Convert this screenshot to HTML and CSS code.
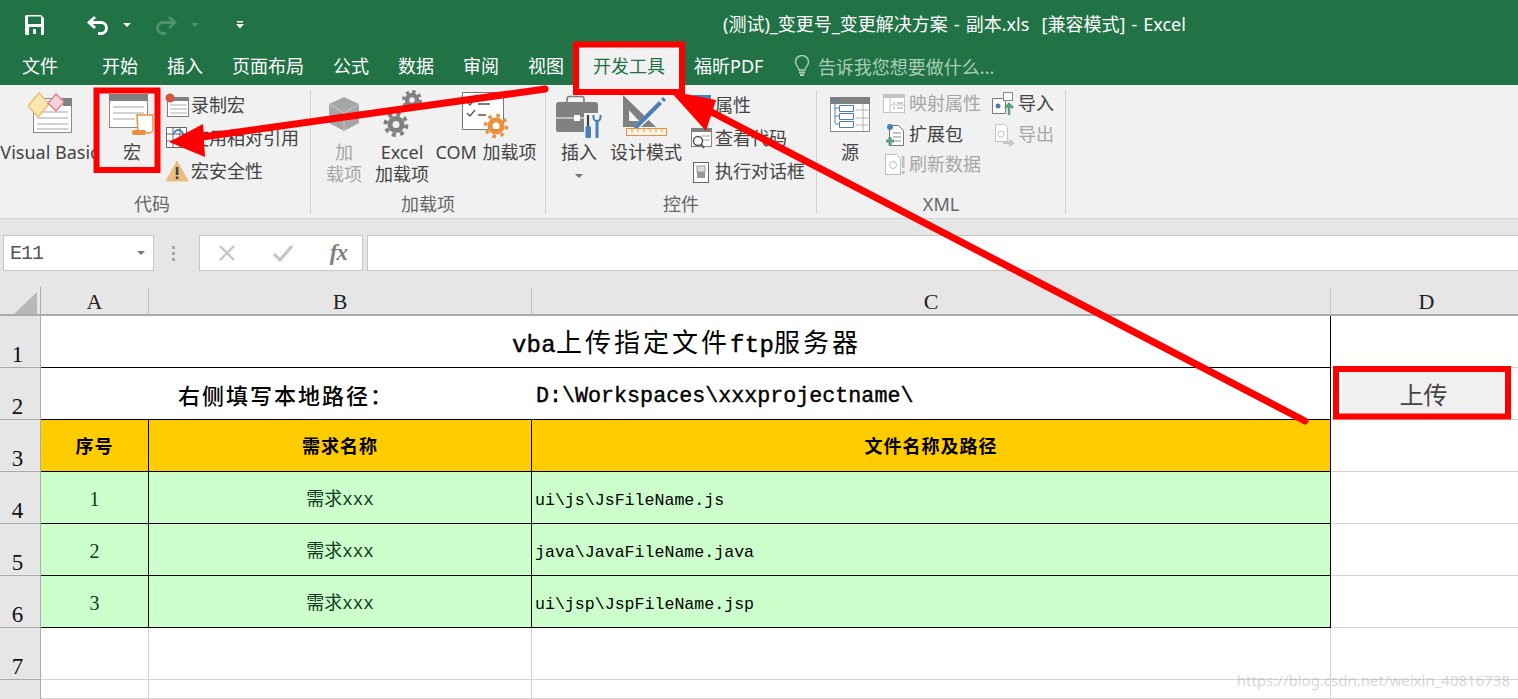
FILE: index.html
```html
<!DOCTYPE html>
<html lang="zh-CN">
<head>
<meta charset="utf-8">
<title>Excel</title>
<link rel="stylesheet" href="styles.css">
</head>
<body>
<div class="app">
  <header class="titlebar">
    <div class="qat">
      <svg class="ico-save" viewBox="25 13 20 20" width="20" height="20"><path fill="#fff" d="M25 14.500a1.500 1.500 0 0 1 1.500-1.500H41l3 3v15.500a1.500 1.500 0 0 1-1.500 1.500h-16a1.500 1.500 0 0 1-1.500-1.500z"/><rect x="28" y="14.500" width="13" height="7.500" fill="#217346"/><rect x="29" y="25" width="12" height="8" fill="#217346"/><rect x="33" y="27" width="3" height="5" fill="#fff"/></svg>
      <svg class="ico-undo" viewBox="86 12 24 22" width="24" height="22"><path fill="none" stroke="#fff" stroke-width="2.800" d="M95 15l-6 5.500 6 5.500M89.500 20.500H101a5.500 5.500 0 0 1 0 11h-3"/></svg>
      <i class="caret light undo-caret"></i>
      <svg class="ico-redo" viewBox="153 12 24 22" width="24" height="22"><path fill="none" stroke="#4f9070" stroke-width="2.800" d="M168 15l6 5.500-6 5.500M173.500 20.500H162a5.500 5.500 0 0 0 0 11h3"/></svg>
      <i class="caret dim redo-caret"></i>
      <svg class="ico-more" viewBox="0 0 8 8" width="8" height="8"><rect x="1" y="0" width="6" height="1.500" fill="#fff"/><path d="M0 3h8L4 7.500z" fill="#fff"/></svg>
    </div>
    <div class="doc-title">(测试)_变更号_变更解决方案 - 副本.xls&nbsp; [兼容模式] - Excel</div>
  </header>

  <nav class="tabs">
    <span class="tab tab-file">文件</span>
    <span class="tab">开始</span>
    <span class="tab">插入</span>
    <span class="tab">页面布局</span>
    <span class="tab">公式</span>
    <span class="tab">数据</span>
    <span class="tab">审阅</span>
    <span class="tab">视图</span>
    <span class="tab active">开发工具</span>
    <span class="tab">福昕PDF</span>
    <span class="tell">
      <svg viewBox="0 0 16 22" width="16" height="22"><path fill="none" stroke="#a9cdb9" stroke-width="1.500" d="M5 15c0-3-3.500-4-3.500-8a6.500 6.500 0 0 1 13 0c0 4-3.500 5-3.500 8z"/><path stroke="#a9cdb9" stroke-width="1.800" d="M5 17.500h6M6 20h4"/></svg>
      告诉我您想要做什么...
    </span>
  </nav>

  <section class="ribbon">
    <div class="group g1">
      <div class="body">
        <div class="big w-vb">
          <svg viewBox="27 90 44 51" width="44" height="51">
            <rect x="32.500" y="98.500" width="38" height="34" fill="#fff" stroke="#8a8a8a"/>
            <rect x="62" y="98" width="9" height="8" fill="#808080"/>
            <path stroke="#a6a6a6" stroke-width="1.200" d="M36 112h31M36 118h31M36 124h31M36 129h31"/>
            <path d="M38 93l10 11-11 13-10-11z" fill="#fbe5b3" stroke="#eac26e" stroke-width="1.500"/>
            <path d="M55 94l8 8-8 9-8-8z" fill="#f6d3da" stroke="#e0808f" stroke-width="1.500"/>
          </svg>
          <span>Visual Basic</span>
        </div>
        <div class="big w-macro">
          <svg viewBox="108 90 48 51" width="48" height="51">
            <rect x="109.500" y="94.500" width="38" height="33" fill="#fff" stroke="#8a8a8a"/>
            <rect x="109" y="94" width="39" height="7" fill="#808080"/>
            <path stroke="#a6a6a6" stroke-width="1.200" d="M113 107h31M113 113h31M113 119h22"/>
            <path d="M137 115h16v14a4 4 0 0 1-4 4h-11z" fill="#fff" stroke="#e8913f" stroke-width="1.500"/>
            <rect x="132" y="130" width="14" height="5" rx="2" fill="#e8913f"/>
          </svg>
          <span>宏</span>
        </div>
        <div class="list l1">
          <div class="row"><svg viewBox="164 92 24 26" width="24" height="26"><rect x="166.500" y="96.500" width="21" height="19" fill="#fff" stroke="#7f7f7f"/><rect x="167" y="96" width="21" height="4" fill="#808080"/><path stroke="#b0b0b0" d="M169 104h17M169 108h17M169 112h17"/><circle cx="169" cy="97" r="4.500" fill="#d2563a"/></svg><span>录制宏</span></div>
          <div class="row"><svg viewBox="164 126 24 26" width="24" height="26"><path fill="#fff" stroke="#666" d="M165.500 127.500h20v20h-20zM172 127.500v20M179 127.500v20M165.500 134h20M165.500 141h20"/><path fill="none" stroke="#3f7fbd" stroke-width="1.800" d="M173 134a4.500 4.500 0 1 1 4 5"/></svg><span>使用相对引用</span></div>
          <div class="row"><svg viewBox="164 158 24 26" width="24" height="26"><path d="M176 160l11 20h-22z" fill="#e8bf80" stroke="#e8bf80" stroke-linejoin="round"/><rect x="174.800" y="166" width="2.600" height="8" fill="#444"/><rect x="174.800" y="175.500" width="2.600" height="2.600" fill="#444"/></svg><span>宏安全性</span></div>
        </div>
      </div>
      <div class="group-label">代码</div>
    </div>

    <div class="group g2">
      <div class="body">
        <div class="big w-addin disabled">
          <svg viewBox="328 90 32 51" width="32" height="51"><path d="M344 97l15 7v19l-15 8-15-8v-19z" fill="#a6a6a6"/><path d="M344 113v18M329 104l15 9 15-9" fill="none" stroke="#c9c9c9"/></svg>
          <span>加<br>载项</span>
        </div>
        <div class="big w-excel">
          <svg viewBox="381 90 42 51" width="42" height="51">
            <g fill="none" stroke="#808080">
              <circle cx="412" cy="100" r="5" stroke-width="4.500"/><circle cx="412" cy="100" r="8.500" stroke-width="3" stroke-dasharray="3.340 3.340"/>
              <circle cx="396" cy="124.500" r="6" stroke-width="5"/><circle cx="396" cy="124.500" r="10.500" stroke-width="4" stroke-dasharray="4 4.250"/>
            </g>
          </svg>
          <span>Excel<br>加载项</span>
        </div>
        <div class="big w-com">
          <svg viewBox="462 90 50 51" width="50" height="51">
            <path d="M463.500 92.500h41v37h-41z" fill="#fff" stroke="#777"/>
            <path d="M468 102l3 3 5-6M468 113l3 3 5-6M479 104h12M479 115h8" fill="none" stroke="#555" stroke-width="1.300"/>
            <g fill="none" stroke="#e8913f"><circle cx="497" cy="126" r="6" stroke-width="5"/><circle cx="497" cy="126" r="10.500" stroke-width="3.500" stroke-dasharray="3.500 4.750"/></g>
          </svg>
          <span>COM 加载项</span>
        </div>
      </div>
      <div class="group-label">加载项</div>
    </div>

    <div class="group g3">
      <div class="body">
        <div class="big w-insert">
          <svg viewBox="557 90 48 51" width="48" height="51">
            <path d="M569 102v-3a2.500 2.500 0 0 1 2.500-2.500h12a2.500 2.500 0 0 1 2.500 2.500v3" fill="none" stroke="#808080" stroke-width="1.600"/>
            <path d="M558 105a3 3 0 0 1 3-3h36a3 3 0 0 1 3 3v25a2 2 0 0 1-2 2h-38a2 2 0 0 1-2-2z" fill="#808080"/>
            <path d="M558 118h40" stroke="#fff"/><rect x="576" y="115" width="6" height="6" fill="#fff"/>
            <path d="M586 113h19v26h-19z" fill="#f1f1f1"/>
            <path d="M590 115v11" stroke="#404040" stroke-width="2.200"/><rect x="587.500" y="126" width="5.500" height="12" rx="1.500" fill="#4a7fb8"/>
            <path d="M599 121v17" stroke="#4a7fb8" stroke-width="3"/><path d="M595.500 115v2.500a3.500 3.500 0 0 0 7 0V115" fill="none" stroke="#4a7fb8" stroke-width="2"/>
          </svg>
          <span>插入</span>
          <i class="caret grey insert-caret"></i>
        </div>
        <div class="big w-design">
          <svg viewBox="625 90 46 51" width="46" height="51">
            <path d="M625 95l33 32h-33z" fill="#808080"/><path d="M631 110l10 11h-10z" fill="#f1f1f1"/>
            <path d="M637 125l25-24 4 4-25 24-5 1z" fill="#f1f1f1"/>
            <path d="M637 125l24-24 3 3-24 24-4 0z" fill="#4a7fb8"/>
            <path d="M663 99l2-2 3 3-2 2z" fill="#4a7fb8"/>
            <rect x="628.500" y="128.500" width="40" height="7" fill="#fdf3e6" stroke="#e8913f"/>
            <path stroke="#e8913f" d="M634 129v3M640 129v3M646 129v3M652 129v3M658 129v3M664 129v3"/>
          </svg>
          <span>设计模式</span>
        </div>
        <div class="list l3">
          <div class="row"><svg viewBox="690 92 22 26" width="22" height="26"><rect x="692.500" y="96.500" width="17" height="19" fill="#fff" stroke="#808080"/><rect x="692" y="94" width="18" height="6" fill="#4a7fb8"/></svg><span>属性</span></div>
          <div class="row"><svg viewBox="690 126 22 26" width="22" height="26"><rect x="690.500" y="128.500" width="20" height="18" fill="#fff" stroke="#808080"/><rect x="690" y="128" width="21" height="4" fill="#808080"/><path stroke="#a6a6a6" d="M700 136h9M702 140h7"/><circle cx="697" cy="141" r="4.500" fill="#fff" stroke="#555" stroke-width="1.500"/><path d="M700 144l3 4" stroke="#555" stroke-width="1.800"/></svg><span>查看代码</span></div>
          <div class="row"><svg viewBox="690 158 22 26" width="22" height="26"><rect x="692.500" y="161.500" width="15" height="20" fill="#fff" stroke="#666"/><rect x="696" y="165" width="8" height="6" fill="#ddd" stroke="#999"/><rect x="696" y="171" width="8" height="6" fill="#999"/></svg><span>执行对话框</span></div>
        </div>
      </div>
      <div class="group-label">控件</div>
    </div>

    <div class="group g4">
      <div class="body">
        <div class="big w-source">
          <svg viewBox="829 90 42 51" width="42" height="51">
            <rect x="830.500" y="97.500" width="39" height="34" fill="#fff" stroke="#8a8a8a"/>
            <rect x="830" y="97" width="40" height="7" fill="#808080"/>
            <path stroke="#b5b5b5" d="M856 110h14M856 118h14M856 125h14M863 104v27"/>
            <path d="M835 98v25M835 108h4M835 116h4M835 124h4" fill="none" stroke="#4a7fb8"/>
            <path d="M839.500 105.500h14v6h-14zM839.500 113.500h14v6h-14zM839.500 121.500h14v6h-14z" fill="#fff" stroke="#4a7fb8"/>
          </svg>
          <span>源</span>
        </div>
        <div class="list l4a">
          <div class="row disabled"><svg viewBox="883 93 22 22" width="22" height="22"><rect x="883.500" y="94.500" width="21" height="18" fill="#fff" stroke="#c4c4c4"/><rect x="883" y="94" width="22" height="4" fill="#c4c4c4"/><path stroke="#c4c4c4" d="M890 98v14M890 105h14"/><path stroke="#999" d="M893 103h2M897 103h6M893 108h2M897 108h6"/></svg><span>映射属性</span></div>
          <div class="row"><svg viewBox="883 123 22 24" width="22" height="24"><path d="M889.500 125.500h9l5 5v15h-14z" fill="#fff" stroke="#777"/><path stroke="#888" d="M893 133h8M893 137h8M893 141h8"/><circle cx="890" cy="127" r="3" fill="#4a7fb8"/><path d="M886 141h8M890 137v8" stroke="#5d9c80" stroke-width="3"/></svg><span>扩展包</span></div>
          <div class="row disabled"><svg viewBox="883 154 22 24" width="22" height="24"><path d="M885.500 155.500h11l4 4v16h-15z" fill="#fff" stroke="#bdbdbd"/><circle cx="893" cy="166" r="3.500" fill="none" stroke="#bdbdbd"/><rect x="902" y="157" width="2.500" height="12" fill="#bdbdbd"/><rect x="902" y="172" width="2.500" height="3" fill="#bdbdbd"/></svg><span>刷新数据</span></div>
        </div>
        <div class="list l4b">
          <div class="row"><svg viewBox="991 92 25 24" width="25" height="24"><path d="M992.500 98.500h10l3 3v12h-13z" fill="#fff" stroke="#777"/><circle cx="998" cy="106" r="2.500" fill="#4a7fb8"/><rect x="1003.500" y="92.500" width="9" height="8" fill="#fff" stroke="#888"/><path d="M1009 115v-10M1005 108l4-4 4 4" fill="none" stroke="#5d9c80" stroke-width="2.500"/></svg><span>导入</span></div>
          <div class="row disabled"><svg viewBox="991 123 25 24" width="25" height="24"><path d="M995.500 124.500h9l3 3v14h-12z" fill="#fff" stroke="#c4c4c4"/><circle cx="1001" cy="134" r="3" fill="none" stroke="#c4c4c4"/><path d="M1003 143h9M1009 140l4 3-4 3" fill="none" stroke="#c4c4c4" stroke-width="2"/></svg><span>导出</span></div>
        </div>
      </div>
      <div class="group-label">XML</div>
    </div>
  </section>

  <section class="formula">
    <div class="namebox"><span>E11</span><i class="caret grey"></i></div>
    <div class="dots"><i></i><i></i><i></i></div>
    <div class="fxbox">
      <svg viewBox="0 0 20 20" width="20" height="20"><path d="M3 3l14 14M17 3L3 17" stroke="#c6c6c6" stroke-width="2.400"/></svg>
      <svg viewBox="0 0 22 20" width="22" height="20"><path d="M2 11l6 6L20 3" fill="none" stroke="#c6c6c6" stroke-width="3.200"/></svg>
      <span class="fx">fx</span>
    </div>
    <div class="input"></div>
  </section>

  <section class="sheet">
    <div class="corner"><svg viewBox="0 0 24 24" width="24" height="24"><path d="M23 2v22H0z" fill="#b8b8b8"/></svg></div>
    <div class="colh">A</div><div class="colh">B</div><div class="colh">C</div><div class="colh">D</div>

    <div class="rowh">1</div>
    <div class="cell span3 title k-b k-r"><span><span class="lat">vba</span>上传指定文件<span class="lat">ftp</span>服务器</span></div>
    <div class="cell"></div>

    <div class="rowh">2</div>
    <div class="cell span2 local k-b">右侧填写本地路径：</div>
    <div class="cell path k-b k-r">D:\Workspaces\xxxprojectname\</div>
    <div class="cell d2"><div class="upload">上传</div></div>

    <div class="rowh">3</div>
    <div class="cell head k-b k-r">序号</div>
    <div class="cell head k-b k-r">需求名称</div>
    <div class="cell head k-b k-r">文件名称及路径</div>
    <div class="cell"></div>

    <div class="rowh">4</div>
    <div class="cell data num k-b k-r">1</div>
    <div class="cell data need k-b k-r"><span>需求<span class="lat2">xxx</span></span></div>
    <div class="cell data file k-b k-r">ui\js\JsFileName.js</div>
    <div class="cell"></div>

    <div class="rowh">5</div>
    <div class="cell data num k-b k-r">2</div>
    <div class="cell data need k-b k-r"><span>需求<span class="lat2">xxx</span></span></div>
    <div class="cell data file k-b k-r">java\JavaFileName.java</div>
    <div class="cell"></div>

    <div class="rowh">6</div>
    <div class="cell data num k-b k-r">3</div>
    <div class="cell data need k-b k-r"><span>需求<span class="lat2">xxx</span></span></div>
    <div class="cell data file k-b k-r">ui\jsp\JspFileName.jsp</div>
    <div class="cell"></div>

    <div class="rowh">7</div><div class="cell"></div><div class="cell"></div><div class="cell"></div><div class="cell"></div>
    <div class="rowh"></div><div class="cell"></div><div class="cell"></div><div class="cell"></div><div class="cell"></div>
  </section>

  <svg class="marks" viewBox="0 0 1518 699" width="1518" height="699">
    <g fill="none" stroke="#f00" stroke-width="6">
      <rect x="576" y="44.500" width="106" height="47.500"/>
      <rect x="96.500" y="90.500" width="61" height="79.500"/>
      <rect x="1336" y="369" width="172" height="47.500"/>
    </g>
    <g stroke="#f00" stroke-width="7" stroke-linecap="round">
      <path d="M545 89L195 138"/>
      <path d="M1305 421L700 106"/>
    </g>
    <path d="M169 142L203 124L205 157z" fill="#f00"/>
    <path d="M670 91L716 100L706 131z" fill="#f00"/>
  </svg>
  <div class="watermark">https://blog.csdn.net/weixin_40816738</div>
</div>
</body>
</html>
```
FILE: styles.css
```css
* { box-sizing: border-box; }
html, body { margin: 0; padding: 0; }
body { font-family: "Noto Sans", "Noto Sans CJK SC", sans-serif; overflow: hidden; background: #fff; }
.app { position: relative; width: 1518px; height: 699px; overflow: hidden; }

/* title bar */
.titlebar { display: flex; align-items: center; height: 47px; background: #217346; color: #fff; }
.qat { display: flex; align-items: center; width: 723px; flex: none; height: 47px; padding: 3px 0 0 25px; }
.ico-save { margin-right: 41px; }
.ico-undo { margin-right: 13px; }
.undo-caret { margin-right: 23px; }
.ico-redo { margin-right: 13px; }
.redo-caret { margin-right: 37px; }
.doc-title { font-size: 18px; word-spacing: 1.400px; white-space: nowrap; margin-top: -1px; }
.caret { display: block; width: 0; height: 0; border-left: 4px solid transparent; border-right: 4px solid transparent; border-top: 4px solid #fff; }
.caret.dim { border-top-color: #4f9070; }
.caret.grey { border-top-color: #777; }

/* tabs */
.tabs { display: flex; align-items: center; height: 38px; background: #217346; color: #fff; font-size: 18px; padding-left: 7.500px; }
.tab { height: 38px; line-height: 38px; padding: 0 14.500px; white-space: nowrap; }
.tab-file { margin-right: 15px; }
.tab.active { background: #f1f1f1; color: #217346; }
.tell { display: flex; align-items: center; gap: 8px; margin-left: 16px; color: #a9cdb9; white-space: nowrap; }

/* ribbon */
.ribbon { display: flex; height: 134px; background: #f1f1f1; border-bottom: 1px solid #d4d4d4; font-size: 18px; color: #444; padding-top: 5px; }
.group { position: relative; display: flex; flex-direction: column; flex: none; height: 124px; border-right: 1px solid #d2d2d2; }
.g1 { width: 311px; }
.g2 { width: 235px; }
.g3 { width: 271px; }
.g4 { width: 249px; }
.body { display: flex; height: 105px; }
.group-label { text-align: center; font-size: 18px; line-height: 20px; color: #666; height: 19px; margin-top: -1px; }
.g1 .group-label { padding-right: 6px; }
.big { display: flex; flex-direction: column; align-items: center; flex: none; line-height: 22px; text-align: center; white-space: nowrap; }
.big svg { display: block; flex: none; }
.big span { margin-top: 0; }
.w-vb { width: 98px; padding-left: 1px; }
.w-macro { width: 66px; margin-left: 1px; }
.w-addin { width: 64px; margin-left: 1px; }
.w-excel { width: 52px; }
.w-com { width: 104px; margin-left: 6px; word-spacing: 1px; }
.w-insert { width: 66px; }
.w-design { width: 68px; }
.w-source { width: 66px; }
.insert-caret { margin-top: 11px; }
.list { display: flex; flex-direction: column; flex: none; margin-top: -1px; }
.row { display: flex; align-items: center; white-space: nowrap; gap: 2px; height: 33px; }
.row span { margin-top: -4px; }
.l3 { margin-left: 11px; }
.l4a { width: 108px; }
.l4a .row, .l4b .row { height: 30.500px; }
.l4a .row { gap: 4px; }
.l4b .row { gap: 2px; }
.disabled { color: #a6a6a6; }

/* formula bar */
.formula { display: flex; align-items: center; height: 68px; background: #e6e6e6; padding: 0 0 0 3px; }
.namebox { display: flex; align-items: center; justify-content: space-between; width: 151px; height: 36px; background: #fff; border: 1px solid #c6c6c6; padding: 0 8px 0 6px; font: 20px "Liberation Mono", monospace; color: #555; letter-spacing: -1px; }
.dots { display: flex; flex-direction: column; gap: 3px; margin: 0 18px 0 18px; width: 4px; }
.dots i { display: block; width: 3px; height: 3px; background: #a6a6a6; }
.fxbox { display: flex; align-items: center; justify-content: space-between; width: 164px; height: 36px; margin-left: 5px; padding: 0 15px 0 17px; background: #fff; border: 1px solid #c6c6c6; }
.fx { font: italic bold 23px "Liberation Serif", serif; color: #808080; letter-spacing: -1px; }
.input { flex: 1; height: 36px; margin-left: 4px; background: #fff; border: 1px solid #c6c6c6; border-right: 0; }

/* sheet */
.sheet { display: grid; grid-template-columns: 41px 108px 383px 799px 192px; grid-template-rows: 29px repeat(7, 52px) 19px; background: #fff; font-family: "Noto Sans CJK SC", sans-serif; color: #000; }
.corner { background: #e6e6e6; border-right: 1px solid #ababab; border-bottom: 2px solid #ababab; padding: 3px 0 0 14px; }
.corner svg { display: block; }
.colh { background: #e6e6e6; border-right: 1px solid #c4c4c4; border-bottom: 2px solid #ababab; text-align: center; font: 22px/30px "Liberation Serif", serif; color: #222; }
.rowh { background: #e6e6e6; border-right: 1px solid #ababab; border-bottom: 1px solid #ababab; text-align: center; font: 23px/26px "Liberation Serif", serif; color: #111; padding: 26px 5px 0 0; }
.cell { border-right: 1px solid #d4d4d4; border-bottom: 1px solid #d4d4d4; display: flex; align-items: center; white-space: nowrap; min-width: 0; }
.k-b { border-bottom-color: #000; }
.k-r { border-right-color: #000; }
.span3 { grid-column: span 3; }
.span2 { grid-column: span 2; }
.title { justify-content: center; font-size: 26px; letter-spacing: 3px; padding: 0 0 2px 2px; }
.lat { font: 24px "Liberation Mono", monospace; letter-spacing: .3px; -webkit-text-stroke: .4px #000; }
.local { justify-content: center; font-size: 22px; font-weight: 500; letter-spacing: 2px; padding: 0 0 0 0; border-right-color: transparent; }
.path { font: 21.700px "Liberation Mono", monospace; -webkit-text-stroke: .4px #000; padding: 5px 0 0 4px; }
.head { justify-content: center; background: #fc0; font-size: 18px; font-weight: 700; letter-spacing: 1px; padding-bottom: 2px; }
.data { background: #cfc; }
.num { justify-content: center; font: 20px "Liberation Serif", serif; color: #0d3b1d; padding-top: 4px; }
.need { justify-content: center; font-size: 18px; color: #0d3b1d; padding-bottom: 1px; }
.lat2 { font: 17.500px "Liberation Mono", monospace; }
.file { font: 16.600px "Liberation Mono", monospace; padding: 6px 0 0 3px; }
.d2 { padding: 0 18px 1px 11px; border-right: 0; }
.upload { flex: 1; height: 100%; background: #f0f0f0; display: flex; align-items: center; justify-content: center; font-size: 24px; color: #444; }

/* annotations over the page */
.marks { position: absolute; left: 0; top: 0; pointer-events: none; }
.watermark { position: absolute; right: 8px; bottom: 9px; font: 15px "Noto Sans", sans-serif; color: rgba(150,150,150,.4); white-space: nowrap; }
```
